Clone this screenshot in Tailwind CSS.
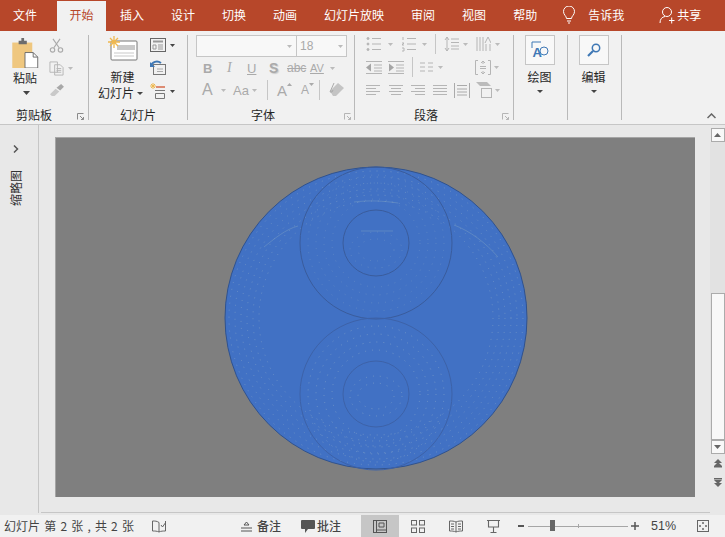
<!DOCTYPE html>
<html lang="zh">
<head>
  <meta charset="UTF-8" />
  <title>PowerPoint</title>
  <script src="https://cdn.jsdelivr.net/npm/@tailwindcss/browser@4"></script>
</head>
<body class="w-[725px] h-[537px] overflow-hidden bg-[#e8e8e8] font-['Noto_Sans_CJK_SC',sans-serif] text-[12px] leading-none text-[#333] flex flex-col">

  <!-- tabs -->
  <div class="h-[31px] shrink-0 bg-[#b7472a] text-white flex items-center pb-px">
    <div class="pl-[13px] pr-[20px]">文件</div>
    <div class="w-[49px] h-[30px] self-end -mb-px pb-[2px] bg-[#f1f1f1] text-[#b7472a] flex items-center justify-center">开始</div>
    <div class="pl-[14px] pr-[13px]">插入</div>
    <div class="pl-[14px] pr-[13px]">设计</div>
    <div class="pl-[14px] pr-[13px]">切换</div>
    <div class="pl-[14px] pr-[13px]">动画</div>
    <div class="pl-[14px] pr-[13px]">幻灯片放映</div>
    <div class="pl-[14px] pr-[13px]">审阅</div>
    <div class="pl-[14px] pr-[13px]">视图</div>
    <div class="pl-[14px] pr-[13px]">帮助</div>
    <svg class="ml-[12px] w-[14px] h-[18px]" viewBox="0 0 14 18" fill="none" stroke="#fff"><path d="M4.500 12.500c0-2.500-3-3.500-3-7a5.500 5.500 0 0 1 11 0c0 3.500-3 4.500-3 7z" /><path d="M5 15h4M6 17h2" /></svg>
    <div class="ml-[12px]">告诉我</div>
    <svg class="ml-[35px] w-[16px] h-[18px]" viewBox="0 0 16 18" fill="none" stroke="#fff"><circle cx="8" cy="6" r="4.500" /><path d="M1 17c0-4 2-6 5-6.500M10 14.500h5.500M12.700 11.500v6" /></svg>
    <div class="ml-[2px]">共享</div>
  </div>

  <!-- ribbon -->
  <div class="h-[94px] shrink-0 bg-[#f1f1f1] border-b border-[#c6c6c6] flex pt-[4px] text-[#262626]">

    <!-- clipboard -->
    <div class="w-[89px] h-[85px] border-r border-[#b9b9b9] flex flex-col relative">
      <div class="flex h-[70px]">
        <div class="w-[44px] flex flex-col items-center pl-[6px]">
          <svg class="w-[28px] h-[30px] mt-[3px]" viewBox="0 0 30 33"><path d="M1 5h22v28H1z" fill="#efc77f" /><path d="M8 3h3V0h3v3h3v4H8z" fill="#6d6d6d" /><path d="M15 16h9l5 5v12H15z" fill="#fff" stroke="#666" /><path d="M24 16v5h5" fill="none" stroke="#666" /></svg>
          <div class="mt-[4px]">粘贴</div>
          <svg class="w-[7px] h-[4px] mt-[7px] ml-[3px]" viewBox="0 0 7 4"><path d="M0 0h7L3.500 4z" fill="#444" /></svg>
        </div>
        <div class="flex flex-col gap-[8px] pt-[3px] pl-[5px]">
          <svg class="w-[15px] h-[15px]" viewBox="0 0 16 17" fill="none" stroke="#aaa" stroke-width="1.300"><path d="M4 1l7 10M12 1L5 11" /><circle cx="3.500" cy="13.500" r="2.500" /><circle cx="12.500" cy="13.500" r="2.500" /></svg>
          <div class="flex items-center gap-[4px]">
            <svg class="w-[15px] h-[15px]" viewBox="0 0 16 16" fill="none" stroke="#b5b5b5"><path d="M1 1h8v11H1zM6 4h6l3 3v8H6z" fill="#f1f1f1" /><path d="M8 8h5M8 10h5M8 12h5" /></svg>
            <svg class="w-[5px] h-[3px]" viewBox="0 0 5 3"><path d="M0 0h5L2.500 3z" fill="#bbb" /></svg>
          </div>
          <svg class="w-[15px] h-[13px]" viewBox="0 0 16 14"><path d="M1 11l6-6 4 3-5 5H3z" fill="#c9c9c9" /><path d="M8 4l5-4 3 3-4 4z" fill="#a8a8a8" /></svg>
        </div>
      </div>
      <div class="absolute left-[16px] top-[74px]">剪贴板</div>
      <svg class="absolute left-[77px] top-[78px] w-[7px] h-[7px]" viewBox="0 0 7 7" fill="none" stroke="#8a8a8a"><path d="M.5 6.500v-6h6M3 3l3.500 3.500M6.500 4v2.500H4" /></svg>
    </div>

    <!-- slides -->
    <div class="w-[99px] h-[85px] border-r border-[#b9b9b9] flex relative">
      <div class="w-[61px] flex flex-col items-center pl-[6px] pt-[1px]">
        <svg class="w-[30px] h-[25px]" viewBox="0 0 30 25"><rect x="3" y="5" width="26" height="19" rx="1" fill="#fff" stroke="#777" /><rect x="9" y="9" width="18" height="5" fill="#c9c9c9" /><path d="M6 17h20M6 20h20" stroke="#c9c9c9" /><path d="M6 0v12M0 6h12M2 2l8 8M10 2l-8 8" stroke="#efb84f" stroke-width="1.300" /></svg>
        <div class="mt-[10px]">新建</div>
        <div class="mt-[4px] whitespace-nowrap flex items-center gap-[3px] pr-[4px]">幻灯片 <svg class="w-[6px] h-[3px]" viewBox="0 0 6 3"><path d="M0 0h6L3 3z" fill="#444" /></svg></div>
      </div>
      <div class="flex flex-col gap-[8px] pt-[3px]">
        <div class="flex items-center gap-[4px]">
          <svg class="w-[16px] h-[14px]" viewBox="0 0 16 14" fill="none" stroke="#666"><rect x=".5" y=".5" width="15" height="13" /><path d="M3 3.500h10" stroke="#999" stroke-width="2" /><path d="M3 7h3v4H3zM8 7h5M8 9h5M8 11h5" stroke="#999" /></svg>
          <svg class="w-[5px] h-[3px]" viewBox="0 0 5 3"><path d="M0 0h5L2.500 3z" fill="#444" /></svg>
        </div>
        <svg class="w-[16px] h-[15px]" viewBox="0 0 16 15" fill="none"><rect x="3.500" y="4.500" width="12" height="10" stroke="#777" /><path d="M7 9h6M7 11.500h6" stroke="#aaa" /><path d="M1 6c1-4 6-6 10-3" stroke="#3f78b5" stroke-width="2" /><path d="M0 2v5h5z" fill="#3f78b5" /></svg>
        <div class="flex items-center gap-[4px]">
          <svg class="w-[16px] h-[16px]" viewBox="0 0 16 16" fill="none"><path d="M3 0v6M0 3h6M1 1l4 4M5 1L1 5" stroke="#efb84f" /><path d="M6 4h9" stroke="#d2562f" stroke-width="1.300" /><path d="M5 7.500h10M5.500 10.500v5h9v-5z" stroke="#777" /></svg>
          <svg class="w-[5px] h-[3px]" viewBox="0 0 5 3"><path d="M0 0h5L2.500 3z" fill="#444" /></svg>
        </div>
      </div>
      <div class="absolute left-[31px] top-[74px]">幻灯片</div>
    </div>

    <!-- font -->
    <div class="w-[167px] h-[85px] border-r border-[#b9b9b9] relative text-[#a9a9a9] pl-[8px]">
      <div class="flex">
        <div class="w-[101px] h-[22px] bg-[#f8f8f8] border border-[#c6c6c6] flex items-center justify-end pr-[4px]"><svg class="w-[5px] h-[3px]" viewBox="0 0 5 3"><path d="M0 0h5L2.500 3z" fill="#bbb" /></svg></div>
        <div class="w-[50px] h-[22px] bg-[#f8f8f8] border border-[#c6c6c6] border-l-0 flex items-center justify-between px-[3px]"><span class="text-[12px] font-['Liberation_Sans',sans-serif]">18</span><svg class="w-[5px] h-[3px]" viewBox="0 0 5 3"><path d="M0 0h5L2.500 3z" fill="#bbb" /></svg></div>
      </div>
      <div class="flex items-center h-[16px] mt-[3px] pl-[7px] font-['Liberation_Sans',sans-serif] text-[12px] text-[#aaa]">
        <span class="w-[24px] font-bold text-[13px]">B</span>
        <span class="w-[20px] italic font-['Liberation_Serif',serif] text-[14px]">I</span>
        <span class="w-[22px] underline text-[13px]">U</span>
        <span class="w-[18px] font-bold text-[14px] [text-shadow:1px_1px_1px_#ccc]">S</span>
        <span class="w-[23px] line-through text-[12px]">abc</span>
        <span class="w-[20px] text-[11px] underline">AV</span>
        <svg class="w-[5px] h-[3px]" viewBox="0 0 5 3"><path d="M0 0h5L2.500 3z" fill="#bbb" /></svg>
      </div>
      <div class="flex items-center h-[20px] mt-[4px] pl-[6px] font-['Liberation_Sans',sans-serif] text-[#aaa]">
        <span class="w-[16px] text-[16px]">A</span>
        <svg class="w-[5px] h-[3px] ml-[3px]" viewBox="0 0 5 3"><path d="M0 0h5L2.500 3z" fill="#bbb" /></svg>
        <span class="w-[16px] ml-[7px] text-[13px] whitespace-nowrap">Aa</span>
        <svg class="w-[5px] h-[3px] ml-[3px]" viewBox="0 0 5 3"><path d="M0 0h5L2.500 3z" fill="#bbb" /></svg>
        <div class="w-px h-[20px] bg-[#c6c6c6] ml-[10px]"></div>
        <span class="w-[10px] ml-[9px] text-[15px]">A</span>
        <svg class="w-[5px] h-[3px] self-start mt-[3px]" viewBox="0 0 5 3"><path d="M2.500 0L5 3H0z" fill="#aaa" /></svg>
        <span class="w-[8px] ml-[9px] text-[12px]">A</span>
        <svg class="w-[5px] h-[3px] self-start mt-[3px]" viewBox="0 0 5 3"><path d="M0 0h5L2.500 3z" fill="#aaa" /></svg>
        <div class="w-px h-[20px] bg-[#c6c6c6] ml-[5px]"></div>
        <svg class="w-[16px] h-[16px] ml-[9px]" viewBox="0 0 16 16"><path d="M1 9l8-8 6 5-8 8H4z" fill="#c4c4c4" /><path d="M5 1L1 10h2l1-2" fill="none" stroke="#aaa" /></svg>
      </div>
      <div class="absolute left-[63px] top-[74px] text-[#262626]">字体</div>
      <svg class="absolute left-[156px] top-[78px] w-[7px] h-[7px]" viewBox="0 0 7 7" fill="none" stroke="#b5b5b5"><path d="M.5 6.500v-6h6M3 3l3.500 3.500M6.500 4v2.500H4" /></svg>
    </div>

    <!-- paragraph -->
    <div class="w-[159px] h-[85px] border-r border-[#b9b9b9] relative pl-[11px]">
      <div class="flex items-center h-[20px] -mt-px">
        <svg class="w-[15px] h-[16px]" viewBox="0 0 15 16" stroke="#b5b5b5" fill="#b5b5b5"><circle cx="2" cy="2.500" r="1" /><circle cx="2" cy="8" r="1" /><circle cx="2" cy="13.500" r="1" /><path d="M6 2.500h9M6 8h9M6 13.500h9" /></svg>
        <svg class="w-[5px] h-[3px] ml-[7px]" viewBox="0 0 5 3"><path d="M0 0h5L2.500 3z" fill="#bbb" /></svg>
        <svg class="ml-[8px] w-[15px] h-[16px]" viewBox="0 0 15 16" stroke="#b5b5b5"><path d="M2 1v3M1 7h2l-2 2h2M1 12h2v3H1M6 2.500h9M6 8h9M6 13.500h9" fill="none" /></svg>
        <svg class="w-[5px] h-[3px] ml-[6px]" viewBox="0 0 5 3"><path d="M0 0h5L2.500 3z" fill="#bbb" /></svg>
        <div class="w-px h-[20px] bg-[#c6c6c6] ml-[8px]"></div>
        <svg class="w-[15px] h-[16px] ml-[8px]" viewBox="0 0 15 16" fill="none" stroke="#b5b5b5"><path d="M3 1v14M1 4l2-3 2 3M1 12l2 3 2-3M7 3h8M7 6.500h8M7 10h8M7 13h8" /></svg>
        <svg class="w-[5px] h-[3px] ml-[4px]" viewBox="0 0 5 3"><path d="M0 0h5L2.500 3z" fill="#bbb" /></svg>
        <svg class="w-[15px] h-[16px] ml-[8px]" viewBox="0 0 15 16" fill="none" stroke="#b5b5b5"><path d="M1 1v14M4 1v14M7 1v14M10 8v7M14 8v7M9 7l3-6 3 6" /></svg>
        <svg class="w-[5px] h-[3px] ml-[4px]" viewBox="0 0 5 3"><path d="M0 0h5L2.500 3z" fill="#bbb" /></svg>
      </div>
      <div class="flex items-center h-[20px] mt-[3px]">
        <svg class="w-[16px] h-[13px]" viewBox="0 0 16 13" fill="none" stroke="#b5b5b5"><path d="M0 .5h16M8 4h8M8 7h8M8 10h8M0 12.500h16" /><path d="M0 6.500l5-4v8z" fill="#a5a5a5" stroke="none" /></svg>
        <svg class="w-[16px] h-[13px] ml-[6px]" viewBox="0 0 16 13" fill="none" stroke="#b5b5b5"><path d="M0 .5h16M8 4h8M8 7h8M8 10h8M0 12.500h16" /><path d="M6 6.500l-5-4v8z" fill="#a5a5a5" stroke="none" /></svg>
        <div class="w-px h-[20px] bg-[#c6c6c6] ml-[8px]"></div>
        <svg class="w-[13px] h-[10px] ml-[7px]" viewBox="0 0 13 10" stroke="#b5b5b5"><path d="M0 1h5M8 1h5M0 5h5M8 5h5M0 9h5M8 9h5" /></svg>
        <svg class="w-[5px] h-[3px] ml-[5px]" viewBox="0 0 5 3"><path d="M0 0h5L2.500 3z" fill="#bbb" /></svg>
        <svg class="w-[16px] h-[15px] ml-[32px]" viewBox="0 0 16 15" fill="none" stroke="#b5b5b5"><path d="M3 .5H.5v14H3M13 .5h2.500v14H13M8 1v3M6 3l2-2 2 2M8 14v-3M6 12l2 2 2-2M5 6.500h6M5 8.500h6" /></svg>
        <svg class="w-[5px] h-[3px] ml-[3px]" viewBox="0 0 5 3"><path d="M0 0h5L2.500 3z" fill="#bbb" /></svg>
      </div>
      <div class="flex items-center h-[20px] mt-[3px]">
        <svg class="w-[14px] h-[10px]" viewBox="0 0 14 10" stroke="#b5b5b5"><path d="M0 .5h14M0 3.500h10M0 6.500h14M0 9.500h10" /></svg>
        <svg class="w-[14px] h-[10px] ml-[9px]" viewBox="0 0 14 10" stroke="#b5b5b5"><path d="M0 .5h14M2 3.500h10M0 6.500h14M2 9.500h10" /></svg>
        <svg class="w-[14px] h-[10px] ml-[8px]" viewBox="0 0 14 10" stroke="#b5b5b5"><path d="M0 .5h14M4 3.500h10M0 6.500h14M4 9.500h10" /></svg>
        <svg class="w-[14px] h-[10px] ml-[8px]" viewBox="0 0 14 10" stroke="#b5b5b5"><path d="M0 .5h14M0 3.500h14M0 6.500h14M0 9.500h14" /></svg>
        <svg class="w-[16px] h-[15px] ml-[7px]" viewBox="0 0 16 15" fill="none" stroke="#aaa"><path d="M.5 0v15M15.500 0v15M3 2.500h10M3 6h10M3 9h10M3 12h10" /></svg>
        <svg class="w-[16px] h-[16px] ml-[6px]" viewBox="0 0 16 16"><path d="M0 0h11l4 4H4z" fill="#bbb" /><rect x="5.500" y="6.500" width="10" height="9" fill="#f1f1f1" stroke="#b5b5b5" /></svg>
        <svg class="w-[5px] h-[3px] ml-[3px]" viewBox="0 0 5 3"><path d="M0 0h5L2.500 3z" fill="#bbb" /></svg>
      </div>
      <div class="absolute left-[59px] top-[74px]">段落</div>
      <svg class="absolute left-[147px] top-[78px] w-[7px] h-[7px]" viewBox="0 0 7 7" fill="none" stroke="#b5b5b5"><path d="M.5 6.500v-6h6M3 3l3.500 3.500M6.500 4v2.500H4" /></svg>
    </div>

    <!-- draw -->
    <div class="w-[54px] h-[85px] border-r border-[#b9b9b9] flex flex-col items-center pr-[2px]">
      <div class="w-[30px] h-[30px] border border-[#c6c6c6] bg-[#f8f8f8] flex items-center justify-center">
        <svg class="w-[18px] h-[18px] overflow-visible" viewBox="0 0 18 18" fill="none"><path d="M1 7V1h9" stroke="#3f78b5" /><circle cx="13" cy="10" r="4" stroke="#3f78b5" fill="#f8f8f8" /><text x="1.500" y="16" font-size="13" font-weight="700" fill="#3f78b5" font-family="Liberation Sans">A</text></svg>
      </div>
      <div class="mt-[6px]">绘图</div>
      <svg class="w-[6px] h-[3px] mt-[7px]" viewBox="0 0 6 3"><path d="M0 0h6L3 3z" fill="#444" /></svg>
    </div>

    <!-- edit -->
    <div class="w-[54px] h-[85px] border-r border-[#b9b9b9] flex flex-col items-center pr-[2px]">
      <div class="w-[30px] h-[30px] border border-[#c6c6c6] bg-[#f8f8f8] flex items-center justify-center">
        <svg class="w-[14px] h-[14px]" viewBox="0 0 14 14" fill="none" stroke="#3f78b5"><circle cx="9" cy="5" r="3.700" stroke-width="1.500" /><path d="M6 8l-5 5" stroke-width="2.200" /></svg>
      </div>
      <div class="mt-[6px]">编辑</div>
      <svg class="w-[6px] h-[3px] mt-[7px]" viewBox="0 0 6 3"><path d="M0 0h6L3 3z" fill="#444" /></svg>
    </div>

    <div class="flex-1 relative">
      <svg class="absolute right-[9px] top-[78px] w-[9px] h-[6px]" viewBox="0 0 9 6" fill="none" stroke="#666" stroke-width="1.500"><path d="M.5 5L4.500 1l4 4" /></svg>
    </div>
  </div>

  <!-- work area -->
  <div class="flex-1 flex min-h-0">
    <div class="w-[39px] shrink-0 border-r border-[#c6c6c6] mb-[2px] flex flex-col items-start pl-[10px]">
      <svg class="mt-[20px] ml-[3px] w-[6px] h-[8px]" viewBox="0 0 6 8" fill="none" stroke="#555" stroke-width="1.500"><path d="M1 .5L4.500 4 1 7.500" /></svg>
      <div class="mt-[17px] [writing-mode:vertical-rl] [text-orientation:sideways] rotate-180 text-[#333]">缩略图</div>
    </div>
    <div class="flex-1 min-w-0 flex flex-col">
      <div class="flex-1 pl-[16px] pt-[12px] flex min-h-0">
        <div class="w-[640px] h-[360px] bg-[#7f7f7f] border-t border-l border-[#a5a5a5] overflow-hidden">
          <svg class="w-[640px] h-[360px]" viewBox="0 0 640 360">
            <circle cx="320" cy="180" r="151" fill="#4171c4" stroke="#2f528f" />
            <!-- dither texture of the gif -->
            <g fill="none" stroke="#9db8cc" stroke-width="1" stroke-dasharray="1 6" opacity="0.45">
              <circle cx="320" cy="180" r="147" />
              <circle cx="320" cy="180" r="141" />
              <circle cx="320" cy="180" r="135" />
              <circle cx="320" cy="180" r="129" />
              <circle cx="320" cy="180" r="123" />
              <circle cx="320" cy="180" r="117" />
            </g>
            <g fill="none" stroke="#9db8cc" stroke-width="1" stroke-dasharray="1 6" opacity="0.3">
              <circle cx="320" cy="105" r="68" />
              <circle cx="320" cy="105" r="60" />
              <circle cx="320" cy="105" r="52" />
              <circle cx="320" cy="105" r="44" />
              <ellipse cx="320" cy="112" rx="26" ry="18" />
              <ellipse cx="320" cy="112" rx="18" ry="11" />
            </g>
            <g fill="none" stroke="#9db8cc" stroke-width="1" stroke-dasharray="1 6" opacity="0.5">
              <circle cx="320" cy="256" r="68" />
              <circle cx="320" cy="256" r="60" />
              <circle cx="320" cy="256" r="52" />
              <circle cx="320" cy="256" r="44" />
              <ellipse cx="320" cy="258" rx="26" ry="20" />
              <ellipse cx="320" cy="258" rx="18" ry="13" />
            </g>
            <g fill="none" stroke-width="1">
              <circle cx="320" cy="105" r="76" stroke="#3a5c9c" />
              <circle cx="320" cy="105" r="33" stroke="#3a5c9c" />
              <circle cx="320" cy="256" r="76" stroke="#3d62a8" />
              <circle cx="320" cy="256" r="33" stroke="#3d62a8" />
            </g>
            <g fill="none" stroke="#7fa3c4" stroke-width="0.800" opacity="0.55">
              <path d="M298 64c15-2 30-1 44 1" />
              <path d="M305 93h32" />
              <path d="M208 109c10-8 22-18 34-21" />
              <path d="M398 87c16 6 32 18 44 32" />
            </g>
          </svg>
        </div>
      </div>
      <div class="h-[3px] mb-[2px] ml-[2px] border-b border-[#c6c6c6]"></div>
    </div>
    <!-- scrollbar -->
    <div class="w-[15px] shrink-0 flex flex-col items-center pt-[3px] pb-[28px]">
      <div class="w-[14px] h-[14px] shrink-0 bg-[#f8f8f8] border border-[#ababab] flex items-center justify-center"><svg class="w-[7px] h-[4px]" viewBox="0 0 7 4"><path d="M3.500 0L7 4H0z" fill="#666" /></svg></div>
      <div class="flex-1 w-full bg-[#e2e2e2] flex flex-col">
        <div class="h-[151px]"></div>
        <div class="h-[147px] w-[14px] mx-auto bg-[#f8f8f8] border border-[#ababab]"></div>
      </div>
      <div class="w-[14px] h-[14px] shrink-0 bg-[#f8f8f8] border border-[#ababab] flex items-center justify-center"><svg class="w-[7px] h-[4px]" viewBox="0 0 7 4"><path d="M0 0h7L3.500 4z" fill="#666" /></svg></div>
      <svg class="mt-[5px] w-[8px] h-[9px]" viewBox="0 0 8 9" fill="#666"><path d="M4 0l4 4H0zM0 7h8v1.500H0z" /><path d="M4 3l4 4H0z" /></svg>
      <svg class="mt-[10px] w-[8px] h-[9px]" viewBox="0 0 8 9" fill="#666"><path d="M0 0h8v1.500H0zM0 2h8L4 6zM0 5h8L4 9z" /></svg>
    </div>
  </div>

  <!-- status bar -->
  <div class="h-[22px] shrink-0 bg-[#f1f1f1] flex items-center text-[#444]">
    <div class="pl-[4px] w-[152px] whitespace-nowrap [word-spacing:1.500px]">幻灯片 第 2 张 , 共 2 张</div>
    <svg class="w-[14px] h-[13px]" viewBox="0 0 14 13" fill="none" stroke="#666"><path d="M7 2.500C5 1 3 1 .5 1v10c2.500 0 4.500 0 6.500 1 2-1 4-1 6.500-1V1M7 2.500V12M9 5l1.500 2L14 2" /></svg>
    <svg class="ml-[75px] w-[11px] h-[11px]" viewBox="0 0 11 11" fill="none" stroke="#555"><path d="M3 4l2.500-3L8 4zM0 7h11M0 10h11" /></svg>
    <div class="ml-[5px] font-medium">备注</div>
    <svg class="ml-[20px] w-[14px] h-[13px]" viewBox="0 0 14 13" fill="#555"><path d="M1 0h12a1 1 0 0 1 1 1v7a1 1 0 0 1-1 1H7l-3 4V9H1a1 1 0 0 1-1-1V1a1 1 0 0 1 1-1z" /></svg>
    <div class="ml-[2px] font-medium">批注</div>
    <div class="ml-[20px] w-[38px] h-[22px] bg-[#c6c6c6] flex items-center justify-center">
      <svg class="w-[14px] h-[13px]" viewBox="0 0 14 13" fill="none" stroke="#555"><rect x=".5" y=".5" width="13" height="12" /><path d="M3.500 .5v12M6 3h5v4H6zM3.500 10h10" /></svg>
    </div>
    <svg class="ml-[12px] w-[14px] h-[13px]" viewBox="0 0 14 13" fill="none" stroke="#666"><rect x=".5" y=".5" width="5" height="4.500" /><rect x="8.500" y=".5" width="5" height="4.500" /><rect x=".5" y="8" width="5" height="4.500" /><rect x="8.500" y="8" width="5" height="4.500" /></svg>
    <svg class="ml-[24px] w-[14px] h-[13px]" viewBox="0 0 14 13" fill="none" stroke="#666"><path d="M7 2C5 1 3 1 .5 1v10c2.500 0 4.500 0 6.500 1 2-1 4-1 6.500-1V1C11 1 9 1 7 2zM7 2v10M2 4h3M2 6.500h3M2 9h3M9 4h3M9 6.500h3M9 9h3" /></svg>
    <svg class="ml-[24px] w-[13px] h-[13px]" viewBox="0 0 13 13" fill="none" stroke="#666"><path d="M0 .5h13M1.500 1v6h10V1M6.500 7v5M3.500 12.500h6" stroke-width="1.100" /></svg>
    <div class="ml-[18px] w-[6px] h-[2px] bg-[#555]"></div>
    <div class="ml-[4px] w-[100px] h-[14px] relative flex items-center">
      <div class="w-full h-px bg-[#a6a6a6]"></div>
      <div class="absolute left-[50px] top-[5px] w-px h-[4px] bg-[#a6a6a6]"></div>
      <div class="absolute left-[22px] top-[1px] w-[5px] h-[11px] bg-[#666]"></div>
    </div>
    <svg class="ml-[3px] w-[8px] h-[8px]" viewBox="0 0 8 8" stroke="#555" stroke-width="1.500"><path d="M0 4h8M4 0v8" /></svg>
    <div class="ml-[12px] text-[12.500px] font-['Liberation_Sans',sans-serif] text-[#444]">51%</div>
    <svg class="ml-[21px] w-[12px] h-[12px]" viewBox="0 0 12 12" fill="none" stroke="#666"><rect x=".5" y=".5" width="11" height="11" /><path d="M6 2v2M5 3h2M6 8v2M5 9h2M2 6h2M3 5v2M8 6h2M9 5v2" /></svg>
  </div>
</body>
</html>
